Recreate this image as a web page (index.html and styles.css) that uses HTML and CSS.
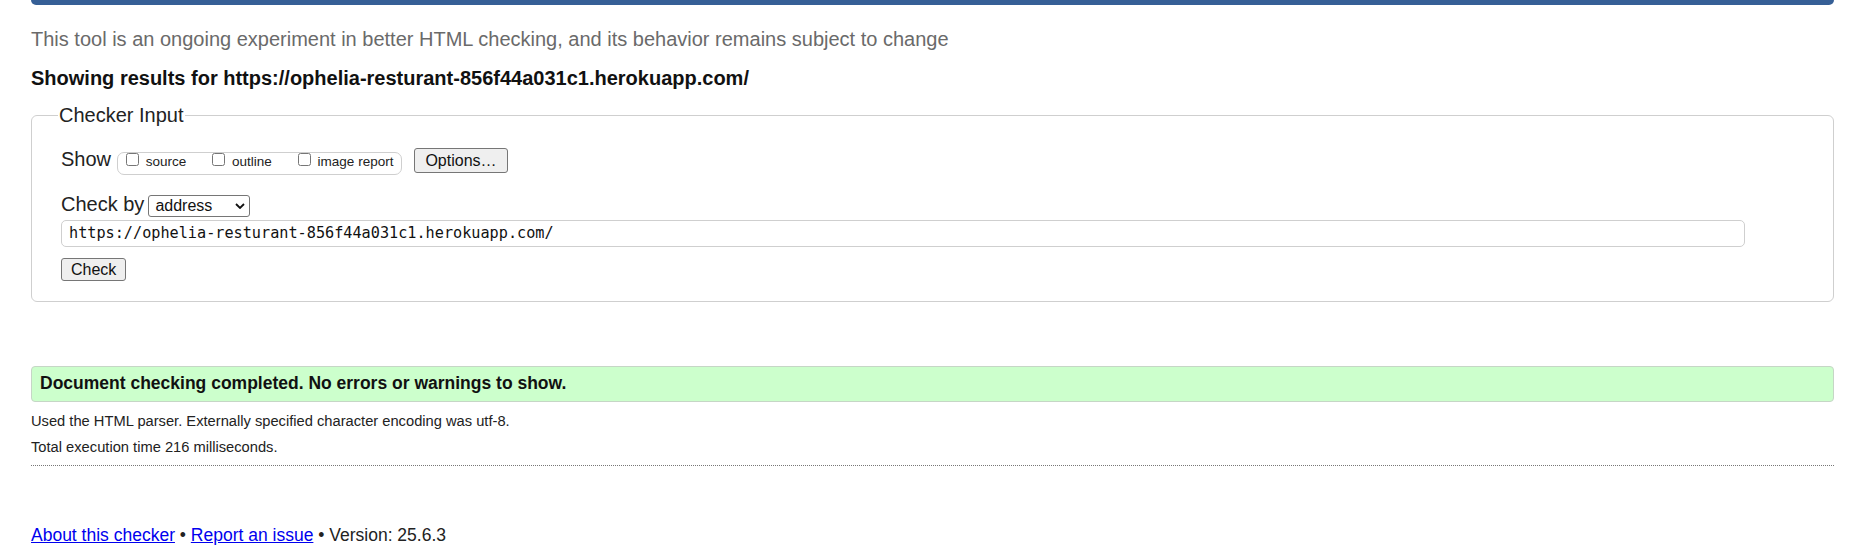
FILE: index.html
```html
<!DOCTYPE html>
<html lang="en">
<head>
<meta charset="utf-8">
<title>Nu Html Checker</title>
<link rel="stylesheet" href="styles.css">
</head>
<body>
<div class="topbar"></div>
<p class="intro">This tool is an ongoing experiment in better HTML checking, and its behavior remains subject to change</p>
<p class="results-for">Showing results for https://ophelia-resturant-856f44a031c1.herokuapp.com/</p>
<form class="checker-form">
  <fieldset class="checker">
    <legend class="checker-legend">Checker Input</legend>
    <div class="row row-show">
      <span class="row-label">Show</span>
      <span class="opts">
        <label class="opt"><input type="checkbox" class="cb"> source</label>
        <label class="opt"><input type="checkbox" class="cb"> outline</label>
        <label class="opt"><input type="checkbox" class="cb"> image report</label>
      </span>
      <button type="button" class="btn btn-options">Options…</button>
    </div>
    <div class="row row-by">
      <span class="row-label">Check by</span>
      <span class="select-wrap">
        <select class="sel">
          <option>address</option>
          <option>file upload</option>
          <option>text input</option>
        </select>
        <svg class="chev" width="10" height="6" viewBox="0 0 10 6"><path d="M1 1 L5 5 L9 1" fill="none" stroke="#111" stroke-width="1.8"/></svg>
      </span>
    </div>
    <input class="url" type="text" value="https://ophelia-resturant-856f44a031c1.herokuapp.com/">
    <div class="row row-submit">
      <button type="button" class="btn btn-check">Check</button>
    </div>
  </fieldset>
</form>
<p class="success">Document checking completed. No errors or warnings to show.</p>
<p class="meta">Used the HTML parser. Externally specified character encoding was utf-8.</p>
<p class="meta meta-second">Total execution time 216 milliseconds.</p>
<div class="rule"></div>
<p class="footer"><a href="#">About this checker</a> • <a href="#">Report an issue</a> • Version: 25.6.3</p>
</body>
</html>
```
FILE: styles.css
```css
html, body {
  background: #fff;
}
body {
  margin: 0;
  padding: 0 16px 0 31px;
  font-family: "Liberation Sans", Arial, sans-serif;
  color: #222;
}
.topbar {
  height: 5px;
  background: #365f96;
  border-radius: 0 0 8px 8px;
}
.intro {
  margin: 22px 0 0;
  font-size: 20px;
  line-height: 24px;
  color: #6a6a6a;
}
.results-for {
  margin: 15px 0 0;
  font-size: 20px;
  line-height: 24px;
  font-weight: bold;
  color: #111;
}
.checker-form {
  margin: 13px 0 0;
}
.checker {
  margin: 0;
  padding: 20px 29px 20px 29px;
  border: 1px solid #cfcfcf;
  border-radius: 6px;
  min-width: 0;
}
.checker-legend {
  padding: 0 1px;
  margin-left: -3px;
  font-size: 20px;
  line-height: 24px;
  color: #222;
}
.row {
  display: flex;
  align-items: baseline;
}
.row-label {
  font-size: 20px;
  line-height: 24px;
  color: #222;
}
.opts {
  display: flex;
  align-items: baseline;
  box-sizing: border-box;
  height: 23px;
  margin-left: 6px;
  padding: 0 8px 0 4px;
  border: 1px solid #cfcfcf;
  border-radius: 7px;
  font-size: 13.5px;
  color: #222;
}
.opt {
  margin-right: 22px;
  white-space: nowrap;
}
.opt:last-child {
  margin-right: 0;
}
.cb {
  width: 13px;
  height: 13px;
  margin: 0 3px 2px 4px;
  vertical-align: baseline;
}
.btn {
  box-sizing: border-box;
  font-family: "Liberation Sans", Arial, sans-serif;
  font-size: 16px;
  color: #111;
  background: #efefef;
  border: 1px solid #767676;
  border-radius: 3px;
}
.btn-options {
  height: 25px;
  line-height: 23px;
  padding: 0 10px;
  margin-left: 12px;
}
.row-by {
  margin-top: 17px;
}
.select-wrap {
  position: relative;
  display: inline-flex;
  margin-left: 4px;
}
.sel {
  appearance: none;
  -webkit-appearance: none;
  box-sizing: border-box;
  width: 102px;
  height: 22px;
  padding: 0 0 0 6px;
  margin: 0;
  font-family: "Liberation Sans", Arial, sans-serif;
  font-size: 16px;
  color: #111;
  background: #fff;
  border: 1px solid #767676;
  border-radius: 3px;
}
.chev {
  position: absolute;
  right: 5px;
  top: 8px;
  pointer-events: none;
}
.url {
  display: block;
  box-sizing: border-box;
  width: 1684px;
  max-width: 100%;
  height: 27px;
  margin: 3px 0 0;
  padding: 0 7px;
  font-family: "DejaVu Sans Mono", "Liberation Mono", monospace;
  font-size: 15.2px;
  color: #111;
  background: #fff;
  border: 1px solid #cfcfcf;
  border-radius: 5px;
}
.row-submit {
  margin-top: 11px;
}
.btn-check {
  height: 23px;
  line-height: 21px;
  padding: 0 9px;
}
.success {
  margin: 64px 0 0;
  padding: 4px 8px 6px;
  font-size: 17.5px;
  line-height: 24px;
  font-weight: bold;
  color: #111;
  background: #ccffcc;
  border: 1px solid #c6d6c6;
  border-radius: 4px;
}
.meta {
  margin: 10px 0 0;
  font-size: 14.7px;
  line-height: 18px;
  color: #222;
}
.meta-second {
  margin-top: 8px;
}
.rule {
  margin-top: 9px;
  border-top: 1px dotted #777;
}
.footer {
  margin: 57px 0 0;
  font-size: 17.5px;
  line-height: 24px;
  color: #222;
}
.footer a {
  color: #0000ee;
}
```
